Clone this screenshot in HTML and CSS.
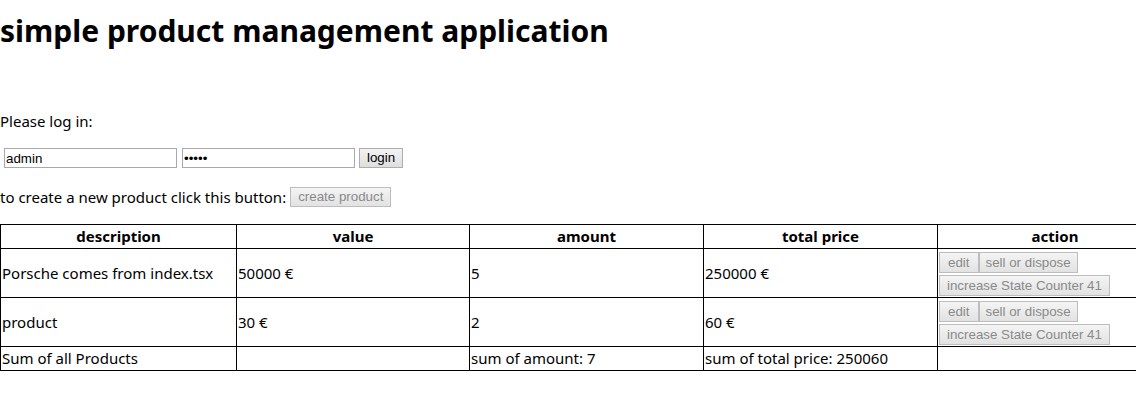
FILE: index.html
```html
<!DOCTYPE html>
<html>
<head>
<meta charset="utf-8">
<title>simple product management application</title>
<link rel="stylesheet" href="styles.css">
</head>
<body>
<h1 class="title">simple product management application</h1>
<p class="prompt">Please log in:</p>
<div class="login-form">
  <input class="field" type="text" value="admin">
  <input class="field" type="password" value="admin">
  <button class="btn">login</button>
</div>
<p class="create-line">to create a new product click this button: <button class="btn" disabled>create product</button></p>
<table class="products">
  <colgroup>
    <col class="c1"><col class="c2"><col class="c3"><col class="c4"><col class="c5">
  </colgroup>
  <thead>
    <tr><th>description</th><th>value</th><th>amount</th><th>total price</th><th>action</th></tr>
  </thead>
  <tbody>
    <tr class="item">
      <td>Porsche comes from index.tsx</td><td>50000 €</td><td>5</td><td>250000 €</td>
      <td><div class="actions"><div class="act-row"><button class="btn btn-edit" disabled>edit</button><button class="btn btn-sell" disabled>sell or dispose</button></div><div class="act-row"><button class="btn" disabled>increase State Counter 41</button></div></div></td>
    </tr>
    <tr class="item">
      <td>product</td><td>30 €</td><td>2</td><td>60 €</td>
      <td><div class="actions"><div class="act-row"><button class="btn btn-edit" disabled>edit</button><button class="btn btn-sell" disabled>sell or dispose</button></div><div class="act-row"><button class="btn" disabled>increase State Counter 41</button></div></div></td>
    </tr>
    <tr class="sum">
      <td>Sum of all Products</td><td></td><td>sum of amount: 7</td><td>sum of total price: 250060</td><td></td>
    </tr>
  </tbody>
</table>
</body>
</html>
```
FILE: styles.css
```css
html {
  overflow-x: hidden;
}
html, body {
  margin: 0;
  padding: 0;
  background: #fff;
}
body {
  font-family: "Noto Sans", "Open Sans", sans-serif;
  font-size: 15px;
  color: #000;
  overflow-x: hidden;
}
.title {
  margin: 0;
  padding-top: 12px;
  font-size: 30px;
  line-height: 38px;
  font-weight: bold;
}
.prompt {
  margin: 61px 0 0;
  line-height: 20px;
}
.login-form {
  margin-top: 17px;
  display: flex;
  align-items: center;
  height: 20px;
}
.field {
  box-sizing: border-box;
  width: 173px;
  height: 20px;
  margin: 0 0 0 4px;
  padding: 0 1px;
  border: 1px solid #a9a9a9;
  font-family: "Liberation Sans", Arial, sans-serif;
  font-size: 13.33px;
  color: #000;
  background: #fff;
}
.field + .field {
  margin-left: 5px;
}
.btn {
  box-sizing: border-box;
  height: 20px;
  padding: 0 7px;
  margin: 0;
  border: 1px solid #adadad;
  background: linear-gradient(#f3f3f3, #dedede);
  font-family: "Liberation Sans", Arial, sans-serif;
  font-size: 13.33px;
  color: #000;
  line-height: 18px;
}
.login-form .btn {
  margin-left: 4px;
}
.btn:disabled {
  color: #8a8a8a;
  border-color: #bdbdbd;
  background: linear-gradient(#f4f4f4, #e2e2e2);
}
.create-line {
  margin: 19px 0 0;
  line-height: 20px;
  display: flex;
  align-items: center;
}
.create-line .btn {
  margin-left: 4px;
}
.products {
  margin-top: 17px;
  width: 1173px;
  border-collapse: collapse;
  table-layout: fixed;
  border: 1px solid #000;
}
.c1 { width: 236px; }
.c2 { width: 233px; }
.c3 { width: 234px; }
.c4 { width: 234px; }
.products th, .products td {
  border: 1px solid #000;
  padding: 1px;
  line-height: 21px;
}
.products th {
  font-weight: bold;
  text-align: center;
}
.products td {
  text-align: left;
  vertical-align: middle;
}
.actions {
  display: flex;
  flex-direction: column;
  align-items: flex-start;
  gap: 2px;
  padding: 2px 0 0;
}
.act-row {
  display: flex;
}
.actions .btn {
  height: 21px;
  line-height: 19px;
  padding: 0 7px;
}
.actions .btn-edit {
  padding: 0 8px;
}
.actions .btn-sell {
  padding: 0 6px;
}
```
